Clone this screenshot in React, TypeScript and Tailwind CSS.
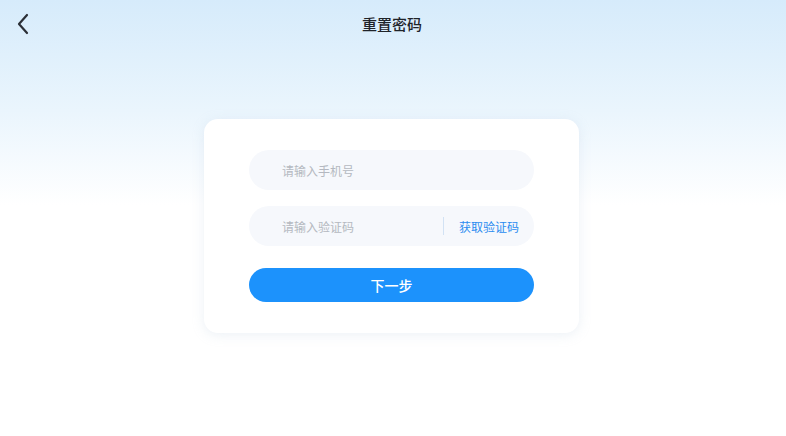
import React from "react";

export default function App() {
  const font = { fontFamily: '"Noto Sans CJK SC", "Noto Sans", sans-serif' };
  return (
    <div
      className="w-[786px] h-[436px] bg-[linear-gradient(180deg,#d6ebfb_0px,#eaf5fd_110px,#ffffff_205px,#ffffff_436px)] flex flex-col"
      style={font}
    >
      <div className="h-[50px] flex items-center relative">
        <button className="absolute left-[12px] top-[12px] w-[22px] h-[24px] flex items-center justify-center">
          <svg width="14" height="22" viewBox="0 0 14 22" fill="none">
            <path d="M11 2 L3 11 L11 20" stroke="#2b2f36" strokeWidth="2.2" strokeLinecap="round" strokeLinejoin="round" />
          </svg>
        </button>
        <div className="flex-1 text-center text-[15px] font-medium text-[#1f2329] -mt-[1px] pr-[2px]">重置密码</div>
      </div>
      <div className="flex justify-center pt-[69px] pr-[3px]">
        <div className="w-[375px] h-[214px] bg-white rounded-[14px] shadow-[0_2px_12px_rgba(180,200,220,0.25)] flex flex-col items-center pt-[31px]">
          <div className="w-[285px] h-[40px] rounded-full bg-[#f6f8fc] flex items-center pl-[33px]">
            <span className="text-[12px] text-[#b4b8c0] mt-[1px]">请输入手机号</span>
          </div>
          <div className="w-[285px] h-[40px] rounded-full bg-[#f6f8fc] flex items-center pl-[33px] pr-[15px] mt-[16px]">
            <span className="text-[12px] text-[#b4b8c0] flex-1 mt-[1px]">请输入验证码</span>
            <div className="w-px h-[18px] bg-[#d2e2f4] mr-[15px]"></div>
            <span className="text-[12px] text-[#2a8cf0] mt-[1px]">获取验证码</span>
          </div>
          <button className="w-[285px] h-[34px] rounded-full bg-[#1c92fc] mt-[22px] text-white text-[14px] font-medium flex items-center justify-center">
            下一步
          </button>
        </div>
      </div>
    </div>
  );
}
